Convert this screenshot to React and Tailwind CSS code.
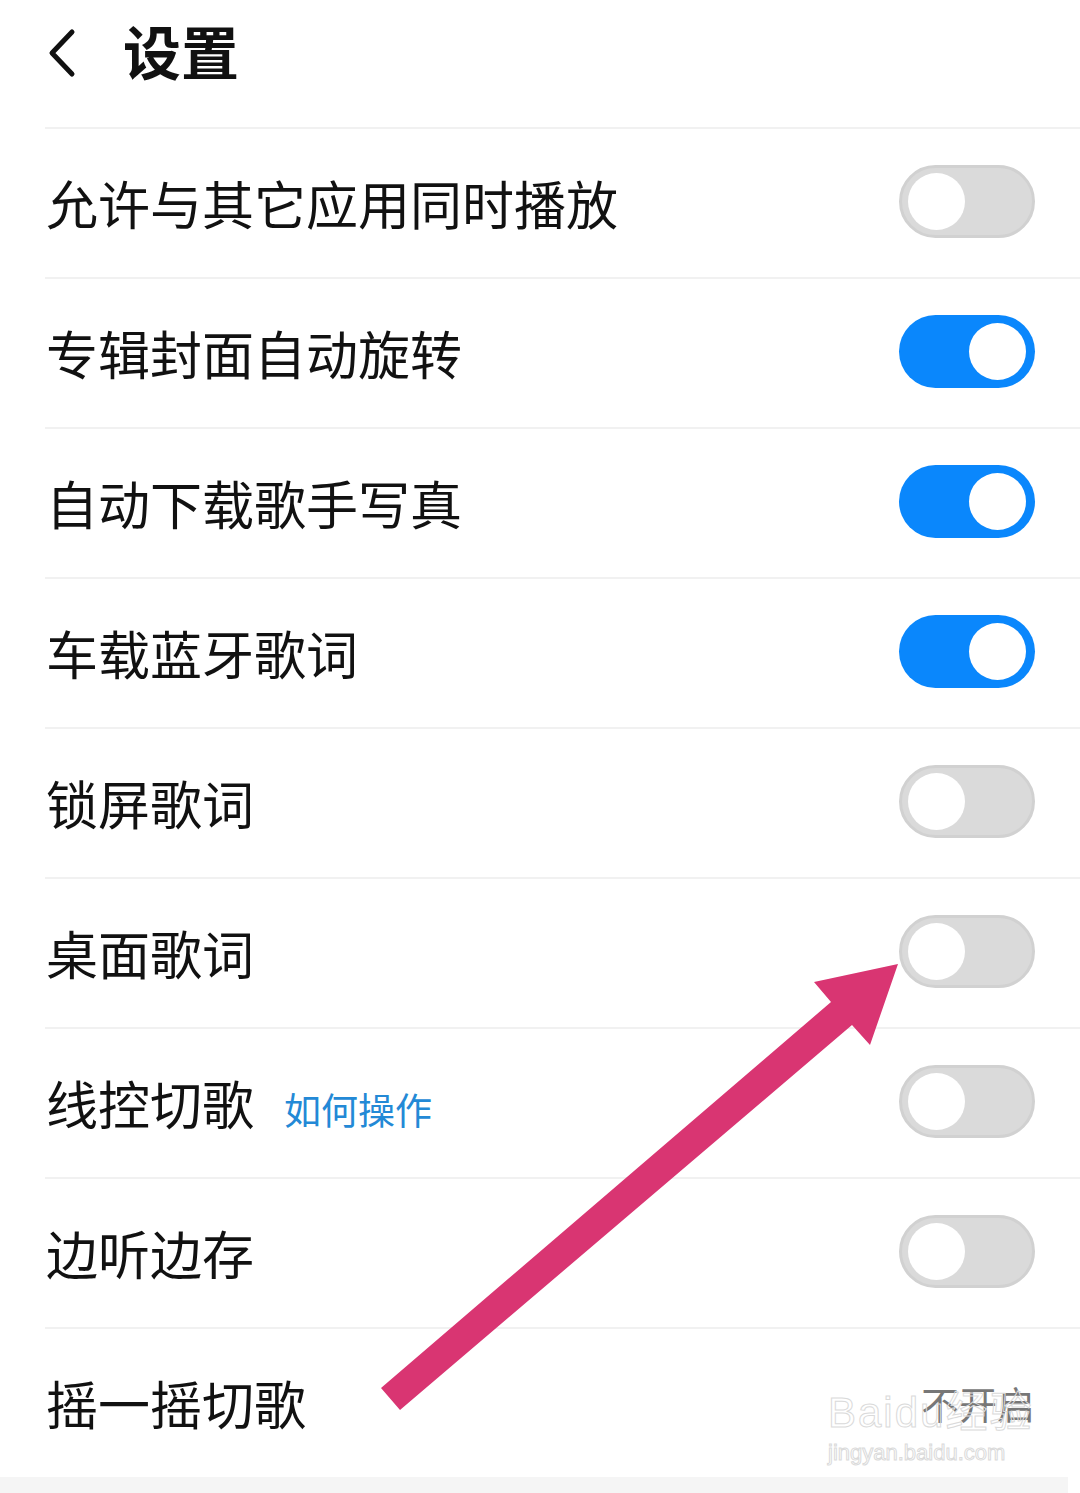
import React from 'react'

const rows = [
  { label: '允许与其它应用同时播放', on: false },
  { label: '专辑封面自动旋转', on: true },
  { label: '自动下载歌手写真', on: true },
  { label: '车载蓝牙歌词', on: true },
  { label: '锁屏歌词', on: false },
  { label: '桌面歌词', on: false },
  { label: '线控切歌', on: false, link: '如何操作' },
  { label: '边听边存', on: false },
  { label: '摇一摇切歌', value: '不开启' },
]

function Toggle({ on }) {
  // knob sits 8px inside the track on either side
  return on ? (
    <div className="w-[136px] h-[73px] mt-[-4px] rounded-full bg-[#0a87fc] flex items-center justify-end pr-[9px]">
      <div className="w-[57px] h-[57px] rounded-full bg-white" />
    </div>
  ) : (
    <div className="w-[136px] h-[73px] mt-[-4px] rounded-full bg-[#dadada] border-[3px] border-[#d1d1d1] flex items-center pl-[6px]">
      <div className="w-[57px] h-[57px] rounded-full bg-white" />
    </div>
  )
}

export default function App() {
  return (
    <div className="relative w-[1080px] h-[1493px] bg-white overflow-hidden font-['Noto_Sans_CJK_SC','Noto_Sans',sans-serif] text-[#111]">
      {/* header */}
      <div className="h-[127px] flex items-center pl-[46px]">
        <svg width="32" height="50" viewBox="0 0 32 50" className="mt-[-22px]">
          <path d="M26 4 L6 25 L26 46" fill="none" stroke="#111" strokeWidth="5" strokeLinecap="round" strokeLinejoin="round" />
        </svg>
        <span className="ml-[45px] text-[58px] font-bold leading-none mt-[-28px]">设置</span>
      </div>

      {/* setting rows */}
      <div className="ml-[45px]">
        {rows.map((r) => (
          <div key={r.label} className="h-[150px] border-t-2 border-[#f1f1f1] flex items-center justify-between pr-[45px]">
            <div className="flex items-baseline">
              <span className="text-[52px] leading-none ml-[1px]">{r.label}</span>
              {r.link && <span className="ml-[30px] text-[37px] leading-none text-[#2389d6]">{r.link}</span>}
            </div>
            {r.value ? (
              <span className="text-[38px] leading-none text-[#777]">{r.value}</span>
            ) : (
              <Toggle on={r.on} />
            )}
          </div>
        ))}
      </div>
      <div className="h-[20px] w-[1068px] bg-[#f5f5f5]" />

      {/* watermark */}
      <div className="absolute left-[828px] top-[1392px] pointer-events-none flex flex-col items-start">
        <span className="text-[42px] leading-none tracking-[2px] font-['Liberation_Sans','Noto_Sans_CJK_SC',sans-serif] text-white/0 [-webkit-text-stroke:1px_#dadada]">Baidu经验</span>
        <span className="mt-[8px] text-[22px] leading-none font-['Liberation_Sans',sans-serif] text-white/0 [-webkit-text-stroke:1px_#dadada]">jingyan.baidu.com</span>
      </div>

      {/* annotation arrow */}
      <svg className="absolute inset-0 pointer-events-none" width="1080" height="1493" viewBox="0 0 1080 1493">
        <polygon
          points="381,1388 400,1410 852,1025 870,1045 898,964 814,982 831,1002"
          fill="#d93572"
        />
      </svg>
    </div>
  )
}
